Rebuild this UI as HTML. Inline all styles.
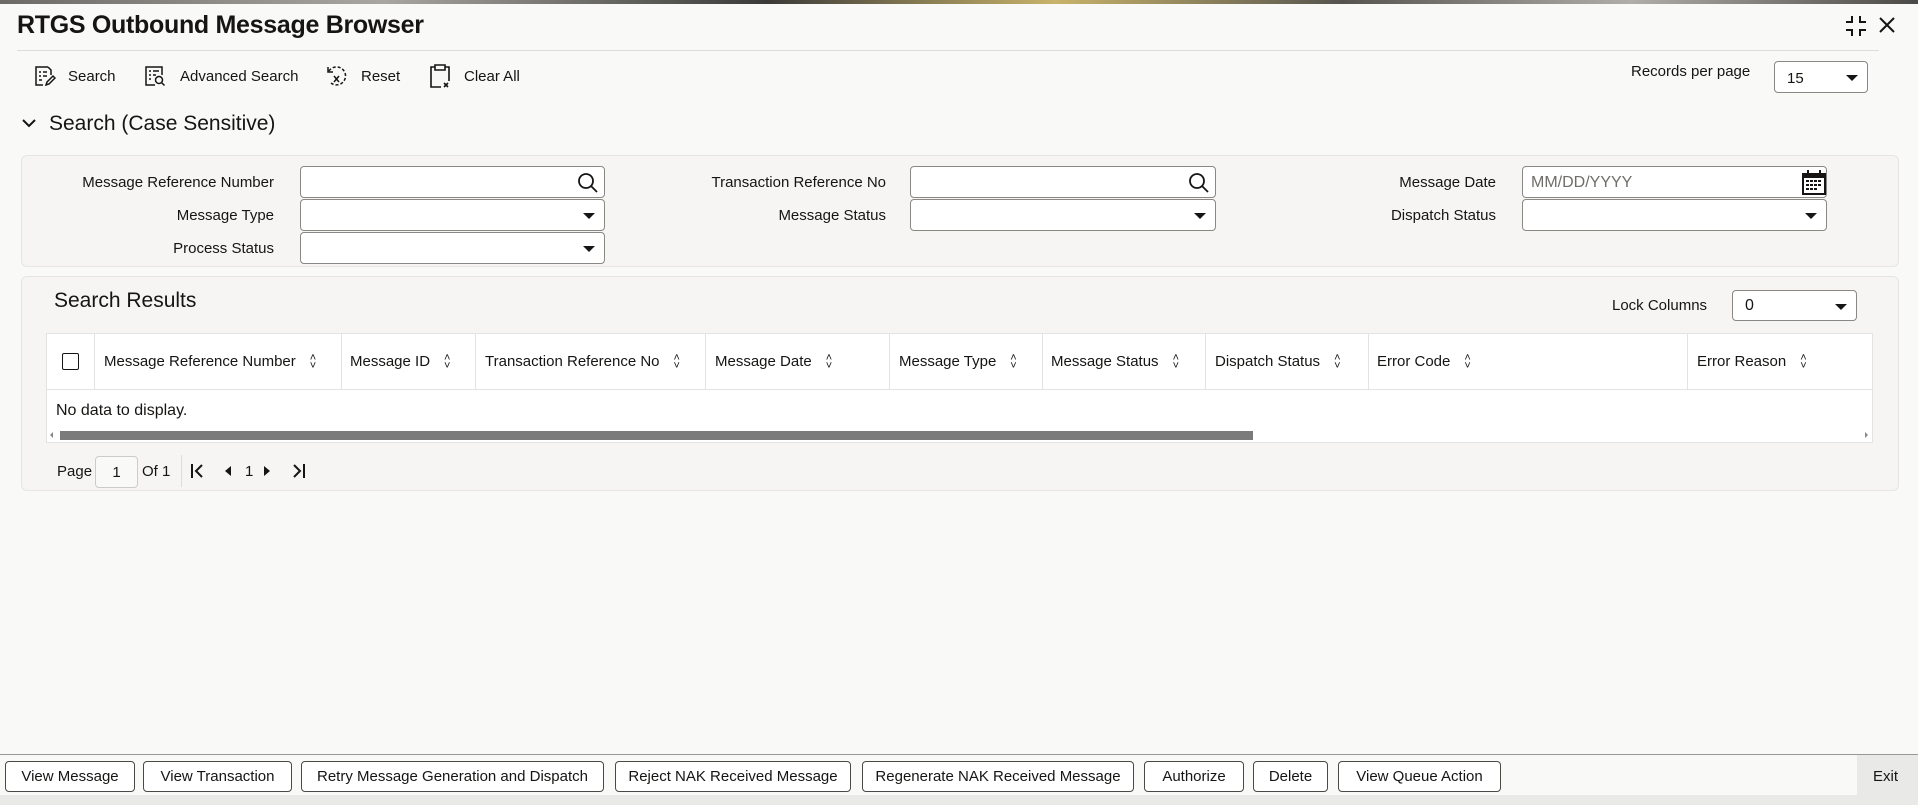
<!DOCTYPE html>
<html><head><meta charset="utf-8"><style>
*{box-sizing:border-box;margin:0;padding:0}
body{width:1918px;height:805px;overflow:hidden;background:#f9f9f8;font-family:"Liberation Sans",sans-serif;color:#161513;position:relative;font-size:15px}
.a{position:absolute}
.strip{left:0;top:0;width:1918px;height:4px;background:linear-gradient(90deg,#6b6a66,#a8a6a0 20%,#3a3a38 40%,#c9b36a 55%,#55544f 70%,#b0aea8 85%,#4a4946)}
.title{left:17px;top:11px;font-size:25px;font-weight:bold;letter-spacing:-0.3px}
.hr{left:17px;top:50px;width:1862px;height:1px;background:#dcdcdc}
.tb{top:66px;font-size:15px;display:flex;align-items:center;height:20px}
.panel{left:21px;width:1878px;background:#f6f5f3;border:1px solid #e6e5e2;border-radius:6px}
.lbl{font-size:15px;text-align:right;width:260px;height:32px;line-height:34px}
.inp{background:#fff;border:1px solid #8a8885;border-radius:4px;height:32px;width:305px}
.caret{position:absolute;right:9px;top:13px;width:0;height:0;border-left:6px solid transparent;border-right:6px solid transparent;border-top:6px solid #161513}
.th{top:334px;height:56px;line-height:56px;font-size:15px;white-space:nowrap}
.vb{top:333px;width:1px;height:56px;background:#e3e3e3}
.sort{display:inline-block;margin-left:14px;font-size:11px;vertical-align:middle;line-height:8px;text-align:center}
.btn{top:761px;height:31px;border:1px solid #4a4946;border-radius:4px;background:#fff;font-size:15px;text-align:center;line-height:29px;white-space:nowrap}
</style></head><body>
<div class="a strip"></div>
<div class="a title">RTGS Outbound Message Browser</div>
<svg class="a" style="left:1845px;top:15px" width="22" height="22" viewBox="0 0 22 22" fill="none" stroke="#161513" stroke-width="2"><path d="M7 1v6H1M15 1v6h6M7 21v-6H1M15 21v-6h6"/></svg>
<svg class="a" style="left:1878px;top:16px" width="18" height="18" viewBox="0 0 18 18" stroke="#161513" stroke-width="2"><path d="M2 2l14 14M16 2L2 16"/></svg>
<div class="a hr"></div>

<svg class="a" style="left:34px;top:65px" width="22" height="22" viewBox="0 0 22 22" fill="none" stroke="#161513" stroke-width="1.5"><path d="M14 2H2v18h7"/><path d="M14 2l3 3v5"/><path d="M5 7h2M9 7h4M5 11h2M9 11h4M5 15h3"/><path d="M12 20l1-3 6-6 2 2-6 6z"/></svg>
<div class="a tb" style="left:68px">Search</div>
<svg class="a" style="left:144px;top:65px" width="22" height="22" viewBox="0 0 22 22" fill="none" stroke="#161513" stroke-width="1.5"><path d="M11 20H2V2h16v8"/><path d="M5 6h2M9 6h6M5 10h2M9 10h3M5 14h2"/><circle cx="15" cy="15" r="3.5"/><path d="M17.5 17.5l3 3"/></svg>
<div class="a tb" style="left:180px">Advanced Search</div>
<svg class="a" style="left:325px;top:65px" width="24" height="22" viewBox="0 0 24 22" fill="none" stroke="#161513" stroke-width="1.5"><path d="M4 6a9 9 0 1 1 2 12" stroke-dasharray="3 2"/><path d="M3 2v5h5"/><path d="M9 11l5 6M14 11l-5 6"/></svg>
<div class="a tb" style="left:361px">Reset</div>
<svg class="a" style="left:429px;top:63px" width="22" height="26" viewBox="0 0 22 26" fill="none" stroke="#161513" stroke-width="1.6"><path d="M6 4H2v20h10M16 4h4v14"/><path d="M6 2h10v5H6z"/><path d="M15 20l4 4M19 20l-4 4"/></svg>
<div class="a tb" style="left:464px">Clear All</div>

<div class="a" style="left:1631px;top:63px;font-size:15px">Records per page</div>
<div class="a inp" style="left:1774px;top:61px;width:94px;height:32px"><span class="a" style="left:12px;top:8px">15</span><div class="caret"></div></div>

<svg class="a" style="left:21px;top:117px" width="16" height="12" viewBox="0 0 16 12" fill="none" stroke="#161513" stroke-width="2"><path d="M2 3l6 6 6-6"/></svg>
<div class="a" style="left:49px;top:112px;font-size:21px">Search (Case Sensitive)</div>

<div class="a panel" style="top:155px;height:112px"></div>
<div class="a lbl" style="left:14px;top:166px">Message Reference Number</div>
<div class="a inp" style="left:300px;top:166px"><svg class="a" style="right:5px;top:5px" width="22" height="22" viewBox="0 0 22 22" fill="none" stroke="#161513" stroke-width="1.8"><circle cx="9" cy="9" r="7"/><path d="M14 14l6 6"/></svg></div>
<div class="a lbl" style="left:14px;top:199px">Message Type</div>
<div class="a inp" style="left:300px;top:199px"><div class="caret"></div></div>
<div class="a lbl" style="left:14px;top:232px">Process Status</div>
<div class="a inp" style="left:300px;top:232px"><div class="caret"></div></div>

<div class="a lbl" style="left:626px;top:166px">Transaction Reference No</div>
<div class="a inp" style="left:910px;top:166px;width:306px"><svg class="a" style="right:5px;top:5px" width="22" height="22" viewBox="0 0 22 22" fill="none" stroke="#161513" stroke-width="1.8"><circle cx="9" cy="9" r="7"/><path d="M14 14l6 6"/></svg></div>
<div class="a lbl" style="left:626px;top:199px">Message Status</div>
<div class="a inp" style="left:910px;top:199px;width:306px"><div class="caret"></div></div>

<div class="a lbl" style="left:1236px;top:166px">Message Date</div>
<div class="a inp" style="left:1522px;top:166px"><span class="a" style="left:8px;top:7px;font-size:16px;color:#6f6d69">MM/DD/YYYY</span><svg class="a" style="right:0px;top:2px" width="24" height="26" viewBox="0 0 24 26"><rect x="1" y="5" width="22" height="20" fill="#fff" stroke="#161513" stroke-width="2"/><rect x="1" y="5" width="22" height="4" fill="#161513"/><path d="M6 1v6M18 1v6" stroke="#161513" stroke-width="2"/><g fill="#161513"><rect x="4" y="11" width="3" height="2"/><rect x="8" y="11" width="3" height="2"/><rect x="12" y="11" width="3" height="2"/><rect x="16" y="11" width="3" height="2"/><rect x="4" y="15" width="3" height="2"/><rect x="8" y="15" width="3" height="2"/><rect x="12" y="15" width="3" height="2"/><rect x="16" y="15" width="3" height="2"/><rect x="4" y="19" width="3" height="2"/><rect x="8" y="19" width="3" height="2"/><rect x="12" y="19" width="3" height="2"/></g></svg></div>
<div class="a lbl" style="left:1236px;top:199px">Dispatch Status</div>
<div class="a inp" style="left:1522px;top:199px"><div class="caret"></div></div>

<div class="a panel" style="top:276px;height:215px"></div>
<div class="a" style="left:54px;top:289px;font-size:21px">Search Results</div>
<div class="a" style="left:1612px;top:297px;font-size:15px">Lock Columns</div>
<div class="a inp" style="left:1732px;top:290px;width:125px;height:31px"><span class="a" style="left:12px;top:6px;font-size:16px">0</span><div class="caret"></div></div>

<div class="a" style="left:46px;top:333px;width:1827px;height:110px;background:#fff;border:1px solid #e3e3e3"></div>
<div class="a" style="left:46px;top:389px;width:1827px;height:1px;background:#e3e3e3"></div>
<div class="a" style="left:62px;top:353px;width:17px;height:17px;border:1.5px solid #161513;border-radius:2px;background:#fff"></div>
<div class="a vb" style="left:94px"></div><div class="a vb" style="left:341px"></div><div class="a vb" style="left:475px"></div><div class="a vb" style="left:705px"></div><div class="a vb" style="left:889px"></div><div class="a vb" style="left:1042px"></div><div class="a vb" style="left:1205px"></div><div class="a vb" style="left:1368px"></div><div class="a vb" style="left:1687px"></div>
<div class="a th" style="left:104px">Message Reference Number<span class="sort">˄<br>˅</span></div>
<div class="a th" style="left:350px">Message ID<span class="sort">˄<br>˅</span></div>
<div class="a th" style="left:485px">Transaction Reference No<span class="sort">˄<br>˅</span></div>
<div class="a th" style="left:715px">Message Date<span class="sort">˄<br>˅</span></div>
<div class="a th" style="left:899px">Message Type<span class="sort">˄<br>˅</span></div>
<div class="a th" style="left:1051px">Message Status<span class="sort">˄<br>˅</span></div>
<div class="a th" style="left:1215px">Dispatch Status<span class="sort">˄<br>˅</span></div>
<div class="a th" style="left:1377px">Error Code<span class="sort">˄<br>˅</span></div>
<div class="a th" style="left:1697px">Error Reason<span class="sort">˄<br>˅</span></div>
<div class="a" style="left:56px;top:402px;font-size:16px">No data to display.</div>
<div class="a" style="left:50px;top:432px;width:0;height:0;border-top:3px solid transparent;border-bottom:3px solid transparent;border-right:3px solid #888"></div>
<div class="a" style="left:60px;top:431px;width:1193px;height:9px;background:#7b7b7b"></div>
<div class="a" style="left:1865px;top:432px;width:0;height:0;border-top:3px solid transparent;border-bottom:3px solid transparent;border-left:3px solid #888"></div>

<div class="a" style="left:57px;top:463px;font-size:15px">Page</div>
<div class="a" style="left:95px;top:456px;width:43px;height:32px;border:1px solid #ccc;border-radius:4px;background:#f9f9f8;text-align:center;line-height:32px;font-size:15px">1</div>
<div class="a" style="left:142px;top:463px;font-size:15px">Of 1</div>
<div class="a" style="left:181px;top:455px;width:1px;height:32px;background:#ddd"></div>
<svg class="a" style="left:190px;top:463px" width="16" height="16" viewBox="0 0 16 16" fill="none" stroke="#161513" stroke-width="2"><path d="M2 1v14M12 2L6 8l6 6"/></svg>
<svg class="a" style="left:224px;top:465px" width="8" height="12" viewBox="0 0 8 12"><path d="M7 1L1 6l6 5z" fill="#161513"/></svg>
<div class="a" style="left:245px;top:463px;font-size:15px">1</div>
<svg class="a" style="left:263px;top:465px" width="8" height="12" viewBox="0 0 8 12"><path d="M1 1l6 5-6 5z" fill="#161513"/></svg>
<svg class="a" style="left:290px;top:463px" width="16" height="16" viewBox="0 0 16 16" fill="none" stroke="#161513" stroke-width="2"><path d="M14 1v14M4 2l6 6-6 6"/></svg>

<div class="a" style="left:0;top:754px;width:1918px;height:1px;background:#9a9894"></div>
<div class="a" style="left:0;top:795px;width:1918px;height:10px;background:#e9e9e8"></div>
<div class="a" style="left:1857px;top:755px;width:61px;height:40px;background:#e9e9e8"></div>
<div class="a" style="left:1873px;top:768px;font-size:15px">Exit</div>
<div class="a btn" style="left:5px;width:130px">View Message</div>
<div class="a btn" style="left:143px;width:149px">View Transaction</div>
<div class="a btn" style="left:301px;width:303px">Retry Message Generation and Dispatch</div>
<div class="a btn" style="left:615px;width:236px">Reject NAK Received Message</div>
<div class="a btn" style="left:862px;width:272px">Regenerate NAK Received Message</div>
<div class="a btn" style="left:1144px;width:100px">Authorize</div>
<div class="a btn" style="left:1253px;width:75px">Delete</div>
<div class="a btn" style="left:1338px;width:163px">View Queue Action</div>
</body></html>
